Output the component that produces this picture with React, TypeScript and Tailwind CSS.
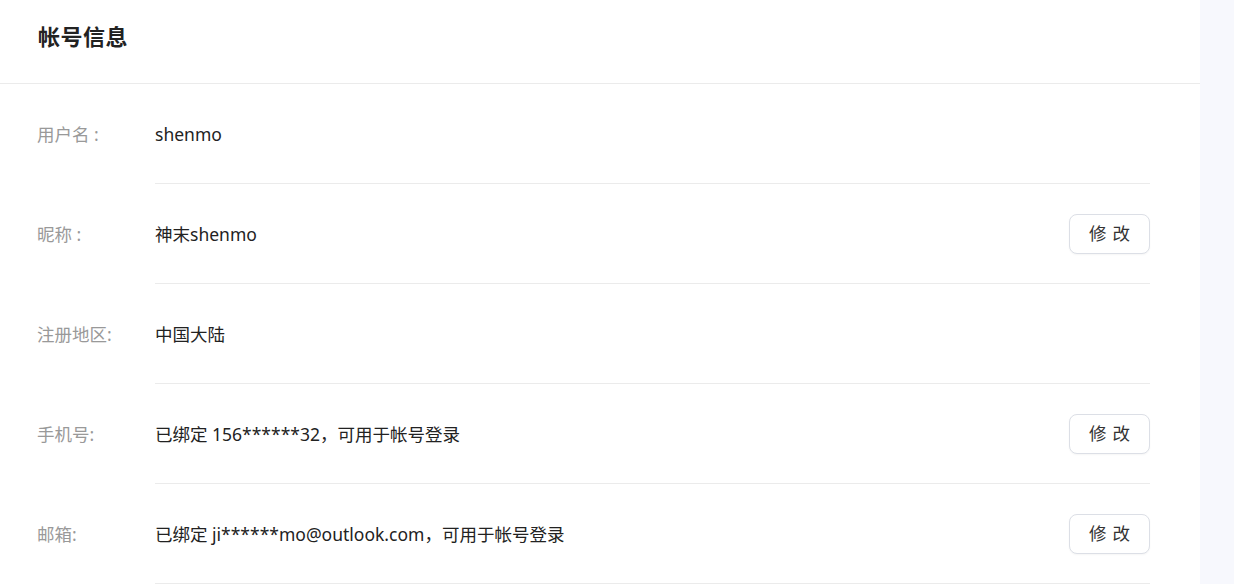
import React from "react";

const rows = [
  { label: "用户名 :", value: "shenmo", edit: false },
  { label: "昵称 :", value: "神末shenmo", edit: true },
  { label: "注册地区:", value: "中国大陆", edit: false },
  { label: "手机号:", value: "已绑定 156******32，可用于帐号登录", edit: true },
  { label: "邮箱:", value: "已绑定 ji******mo@outlook.com，可用于帐号登录", edit: true },
];

const App = () => {
  return (
    <div
      className="flex w-full h-[584px] bg-white overflow-hidden"
      style={{ fontFamily: '"Noto Sans", "Noto Sans CJK SC", sans-serif' }}
    >
      <div className="w-[1200px] shrink-0 bg-white">
        <div className="h-[84px] border-b border-[#ebebeb] flex items-center pl-[38px]">
          <h1 className="text-[22px] font-bold text-[#222] tracking-[0.5px] -mt-[10px]">帐号信息</h1>
        </div>
        <div className="pr-[50px]">
          {rows.map((row, i) => (
            <div key={`row_${i}`} className="flex h-[100px]">
              <div className="w-[155px] shrink-0 pl-[37px] pt-[1px] flex items-center text-[17.5px] text-[#999]">
                {row.label}
              </div>
              <div className="flex-1 flex items-center justify-between border-b border-[#ebebeb] text-[17.5px] text-[#222]">
                <span className="pt-[1px]">{row.value}</span>
                {row.edit && (
                  <button className="w-[81px] h-[40px] rounded-[8px] border border-[#dcdfe6] bg-white text-[17.5px] text-[#333] tracking-[6px] pl-[6px] shadow-[0_1px_2px_rgba(0,0,0,0.04)]">
                    修改
                  </button>
                )}
              </div>
            </div>
          ))}
        </div>
      </div>
      <div className="flex-1 bg-[#f7f8fd]" />
    </div>
  );
};

export default App;
